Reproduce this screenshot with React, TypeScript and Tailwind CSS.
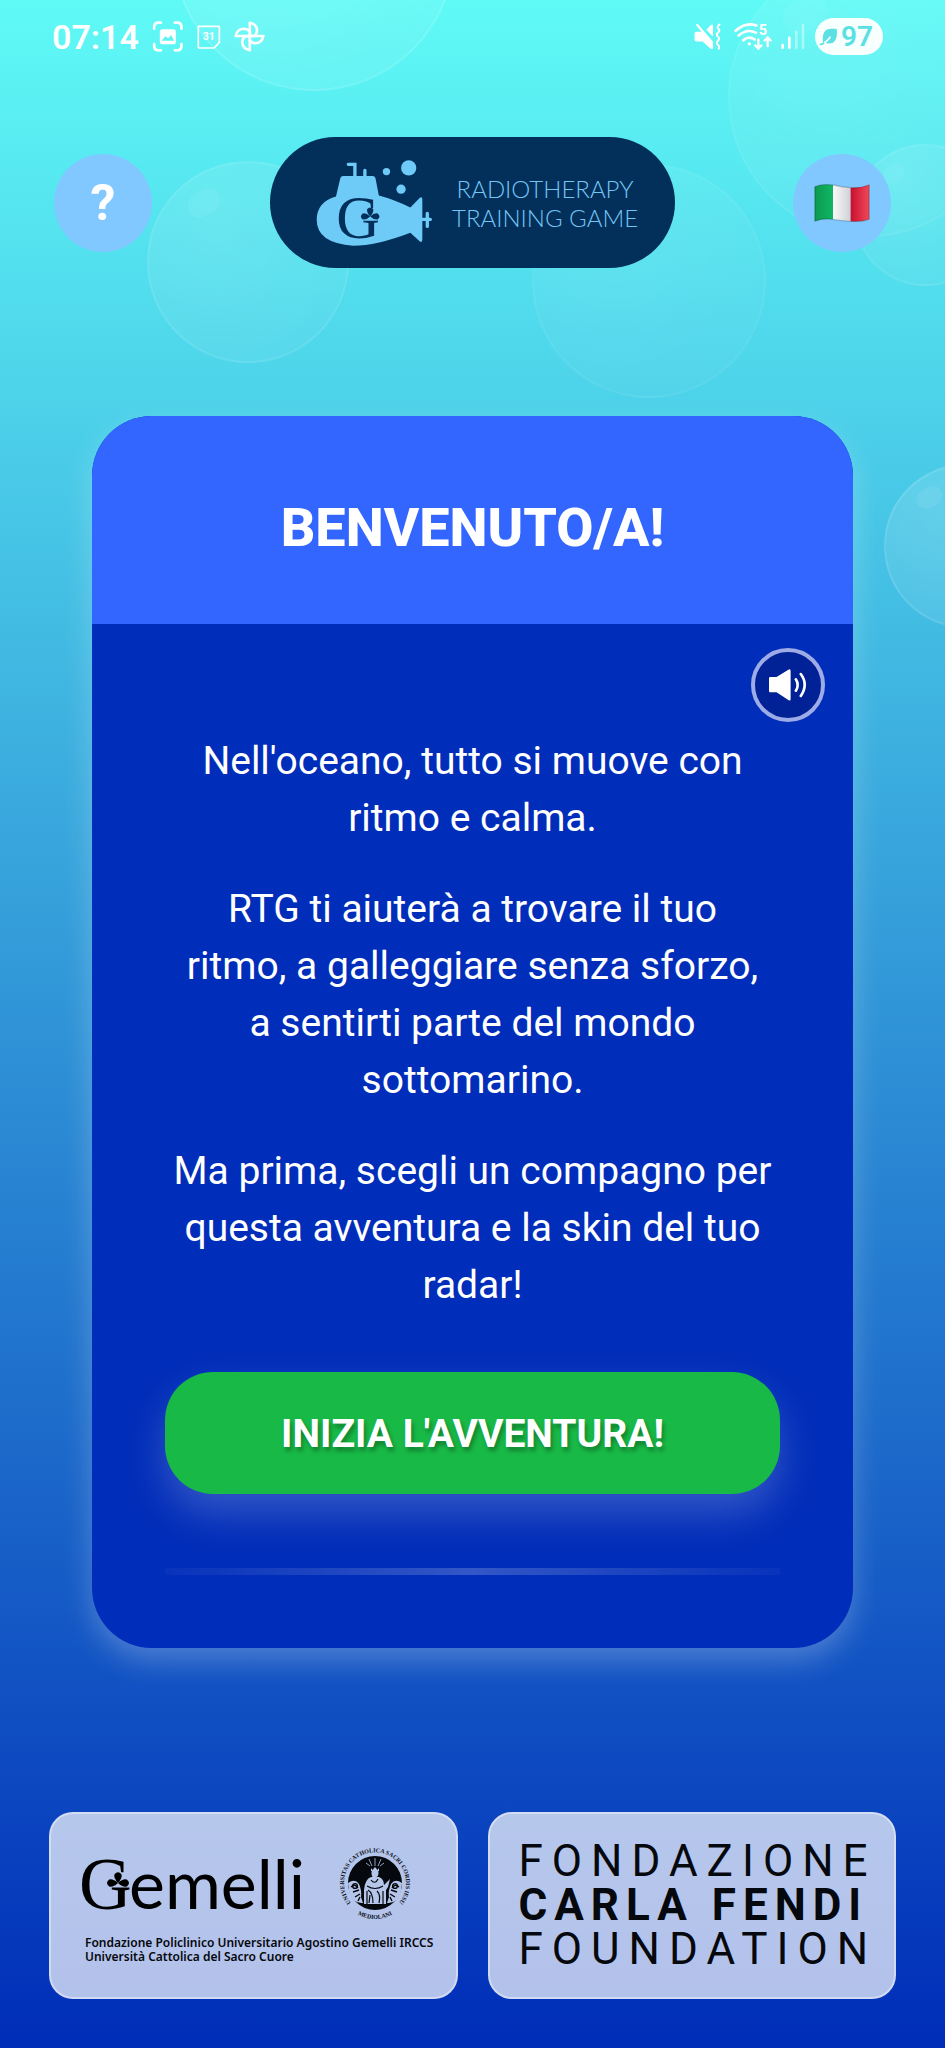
import clsx from "clsx";

type BubbleProps = {
  className: string;
};

// Decorative air bubble, placed freely on the sea background
function Bubble({ className }: BubbleProps) {
  return (
    <div
      className={clsx(
        "absolute rounded-full border-2 border-white/10 bg-radial-[at_35%_30%] from-white/15 via-white/10 to-white/5",
        className,
      )}
    >
      <div className="absolute top-[14%] left-[19%] h-[12%] w-[17%] -rotate-30 rounded-full bg-white/7" />
    </div>
  );
}

function StatusBar() {
  return (
    <div className="relative mt-[18px] flex h-[37px] items-center justify-between pr-[62px] pl-[52px] text-white">
      <div className="flex items-center gap-[13px]">
        <span className="text-[34px] leading-none font-semibold">07:14</span>
        <svg className="h-[31px] w-[32px]" viewBox="460 65 95 93" fill="none" aria-hidden>
          <path
            d="M466 88v-5q0-13 13-13h7M528 70h7q13 0 13 13v5M548 134v6q0 13-13 13h-7M486 153h-7q-13 0-13-13v-6"
            stroke="currentColor"
            strokeWidth="8"
            strokeLinecap="round"
          />
          <rect x="483" y="90" width="48" height="45" rx="8" fill="currentColor" />
          <path d="M488 124l12-13 8 6 9-10 9 17Z" fill="#5cf3f2" />
        </svg>
        <svg className="h-[24px] w-[24px]" viewBox="595 75 73 73" fill="none" aria-hidden>
          <path
            d="M601 79h60q2 0 2 2v47l-16 17h-46q-2 0-2-2V81q0-2 2-2Z"
            stroke="currentColor"
            strokeWidth="5"
          />
          <text x="631" y="121" textAnchor="middle" fontSize="32" fontWeight="700" fill="currentColor">
            31
          </text>
        </svg>
        <svg
          className="h-[31px] w-[31px]"
          viewBox="707 65 94 93"
          fill="none"
          stroke="currentColor"
          strokeWidth="8"
          strokeLinejoin="round"
          aria-hidden
        >
          <path d="M755 110V70q20 4 22 21 0 12-8 19Z" />
          <path d="M755 110h41q-4 20-22 22-13 0-19-8Z" />
          <path d="M755 110v43q-21-4-23-22 0-14 9-20Z" />
          <path d="M755 110h-43q4-20 23-22 13 0 20 9Z" />
        </svg>
      </div>
      <div className="flex items-center">
        <svg className="h-[27px] w-[28px]" viewBox="669 72 82 80" aria-hidden>
          <path
            d="M676 98H692L725 134V145Q724 152 716 147L694 127H676Q670 127 670 120V104Q670 98 676 98Z"
            fill="currentColor"
          />
          <path d="M705 92L718 79Q725 73 725 82V113Z" fill="currentColor" />
          <path d="M678 78L722 129" stroke="currentColor" strokeWidth="7" strokeLinecap="round" />
          <path
            d="M744 77q-9 6-3 12 6 6-2 12-6 6 1 12 6 6-1 12-6 6 1 12 5 5 2 11"
            fill="none"
            stroke="currentColor"
            strokeWidth="6"
            strokeLinecap="round"
          />
        </svg>
        <svg
          className="ml-[12px] h-[29px] w-[39px]"
          viewBox="789 72 117 86"
          fill="none"
          stroke="currentColor"
          strokeWidth="8"
          strokeLinecap="round"
          aria-hidden
        >
          <path d="M794 98q30-28 62-16M803 112q26-22 52-8M817 126q17-14 34-2" />
          <circle cx="835" cy="137" r="5" fill="currentColor" stroke="none" />
          <path d="M862 124v26M853 142l9 9 9-9M890 144v-26M881 127l9-9 9 9" strokeWidth="7" />
          <text x="863" y="110" fontSize="44" fontWeight="700" fill="currentColor" stroke="none">
            5
          </text>
        </svg>
        <svg
          className="ml-[7px] h-[27px] w-[26px]"
          viewBox="924 72 78 80"
          stroke="currentColor"
          strokeWidth="8"
          strokeLinecap="round"
          aria-hidden
        >
          <path d="M932 138v8M952 116v30" />
          <path d="M973 98v48M993 77v69" opacity="0.4" />
        </svg>
        <div className="ml-[9px] flex h-[37px] w-[68px] items-center rounded-full bg-white/95 pl-[4px] text-[#5be0e4]">
          <svg className="h-[18px] w-[19px]" viewBox="1040 84 58 54" aria-hidden>
            <path d="M1052 126q-4-40 26-40h16q3 22-4 34-10 18-38 6Z" fill="currentColor" />
            <path d="M1043 134q18-4 32-24" fill="none" stroke="#fff" strokeWidth="5" />
            <path d="M1042 134q8 0 14-6" fill="none" stroke="currentColor" strokeWidth="5" />
          </svg>
          <span className="ml-[3px] text-[28px] leading-none font-semibold">97</span>
        </div>
      </div>
    </div>
  );
}

type CloverProps = {
  x: number;
  y: number;
  r: number;
};

function Clover({ x, y, r }: CloverProps) {
  return (
    <g transform={`translate(${x} ${y}) scale(${r})`}>
      <path d="M0 0Q-.42-.45-.32-.8Q0-1.15.32-.8Q.42-.45 0 0Z" />
      <path d="M0 0Q.45-.42.8-.32Q1.2 0 .8.32Q.45.42 0 0Z" />
      <path d="M0 0Q-.45-.42-.8-.32Q-1.2 0-.8.32Q-.45.42 0 0Z" />
    </g>
  );
}

function GameLogo() {
  return (
    <div className="flex h-[131px] w-[405px] items-center rounded-full bg-[#03305b] pl-[45px]">
      <svg
        className="h-[88px] w-[118px] overflow-visible"
        viewBox="165 116 355 265"
        fill="#6ecbf7"
        aria-hidden
      >
        <path d="M228 229L241 174Q243 167 250 167H338Q345 167 347 174L357 226Q400 237 452 262L479 234Q488 227 488 238V358Q488 370 479 363L452 338Q350 377 280 377Q170 370 170 300Q170 245 228 229Z" />
        <path
          d="M265 132H285V170M315 150V170M503 280V319M486 298H512"
          fill="none"
          stroke="#6ecbf7"
          strokeWidth="10"
          strokeLinecap="round"
        />
        <circle cx="380" cy="154" r="11" />
        <circle cx="447" cy="143" r="23" />
        <circle cx="424" cy="207" r="14" />
        <g fill="#03305b">
          <text x="229" y="354" fontSize="182" className="font-['Liberation_Serif',serif]">
            G
          </text>
          <Clover x={331} y={289} r={28} />
        </g>
      </svg>
      <p className="ml-[19px] text-center font-['Lato',sans-serif] text-[24px] leading-[29px] font-light whitespace-nowrap text-[#74c5f3]">
        RADIOTHERAPY
        <br />
        TRAINING GAME
      </p>
    </div>
  );
}

function ItalianFlag() {
  return (
    <svg className="h-[38px] w-[56px]" viewBox="0 0 168 114" aria-hidden>
      <defs>
        <linearGradient id="flag-white" x1="0" x2="1">
          <stop offset="0" stopColor="#fafafa" />
          <stop offset="1" stopColor="#cfd0d6" />
        </linearGradient>
        <linearGradient id="flag-red" x1="0" x2="1">
          <stop offset="0" stopColor="#c8102e" />
          <stop offset="1" stopColor="#f0495a" />
        </linearGradient>
        <linearGradient id="flag-green" x1="0" x2="1">
          <stop offset="0" stopColor="#0b9a50" />
          <stop offset="1" stopColor="#10b765" />
        </linearGradient>
      </defs>
      <path d="M2 8Q28-2 57 3V106Q28 102 2 112Z" fill="url(#flag-green)" />
      <path d="M57 3Q84 9 110 11V112Q84 110 57 106Z" fill="url(#flag-white)" />
      <path d="M110 11Q140 13 166 2V106Q140 115 110 112Z" fill="url(#flag-red)" />
      <path
        d="M3 8Q28-2 57 3 84 9 110 11 140 13 165 3V106Q140 115 110 112 84 110 57 106 28 102 3 111Z"
        fill="none"
        stroke="#000"
        strokeOpacity="0.18"
        strokeWidth="4"
      />
    </svg>
  );
}

function GemelliLogo() {
  return (
    <div className="flex items-center justify-between pr-[14px]">
      <svg
        className="h-[60px] w-[226px] overflow-visible"
        viewBox="0 0 226 60"
        aria-label="Gemelli"
        role="img"
      >
        <text y="56" className="font-['Lato',sans-serif]">
          <tspan x="-2" fontSize="73" className="font-['Liberation_Serif',serif]">
            G
          </tspan>
          <tspan x="48" fontSize="68">
            emelli
          </tspan>
        </text>
        <Clover x={37} y={30} r={11} />
      </svg>
      <svg className="h-[74px] w-[74px] overflow-visible" viewBox="-37 -37 74 74" aria-hidden>
        <defs>
          <path id="seal-top" d="M-23 21A31 31 0 1 1 23 21" />
          <path id="seal-bottom" d="M-28 22A35 35 0 0 0 28 22" />
        </defs>
        <g fill="#0a0d14" fontSize="6" fontWeight="700" className="font-['Liberation_Serif',serif]">
          <text>
            <textPath href="#seal-top" startOffset="50%" textAnchor="middle">
              UNIVERSITAS CATHOLICA SACRI CORDIS IESU
            </textPath>
          </text>
          <text>
            <textPath href="#seal-bottom" startOffset="50%" textAnchor="middle">
              MEDIOLANI
            </textPath>
          </text>
        </g>
        <circle r="27" fill="#05080c" />
        {/* side angels */}
        <g fill="#b6c6ea">
          <path d="M-27 0Q-20-5-16 1Q-13 8-14 14L-12 20Q-23 21-26 8Z" />
          <path d="M27 0Q20-5 16 1Q13 8 14 14L12 20Q23 21 26 8Z" />
        </g>
        <g fill="none" stroke="#05080c" strokeWidth="1.4">
          <path d="M-24 4Q-20 0-17 5M-22 9l6-2M-20 14l5-3M-17 18l2-4M24 4Q20 0 17 5M22 9l-6-2M20 14l-5-3M17 18l-2-4" />
          <circle cx="-20" cy="3" r="2.4" />
          <circle cx="20" cy="3" r="2.4" />
        </g>
        {/* enthroned figure */}
        <g fill="#b6c6ea">
          <path d="M-3.5-10a3.5 4 0 1 1 7 0q0 4-3.5 4.5t-3.5-4.5ZM-4-15l1.5 2L0-16l2.500 3L4-15v3H-4Z" />
          <path d="M-4-6H4Q9-4 9 2L15-4 13 4 11 7V21H-11V7Q-10-4-4-6Z" />
        </g>
        <g stroke="#b6c6ea" strokeWidth="0.8">
          <path d="M0-17V-25M-3-17L-6-24M3-17L6-24M-5-17L-9-20M5-17L9-20" />
        </g>
        <g fill="none" stroke="#05080c" strokeWidth="1.2">
          <path d="M-8 3Q0 8 8 3M-7 7Q-2 10-2 20M2 8Q6 12 4 20M-4-3Q0 2 3-4M-8 8V21M8 8V21M-5 12L-6 20" />
        </g>
      </svg>
    </div>
  );
}

function WelcomeCard() {
  return (
    <main className="relative mx-[92px] mt-[148px] rounded-[60px] bg-[#002db9] text-white shadow-[0_12px_30px_rgba(255,255,255,0.25)]">
      <h1 className="flex h-[208px] items-center justify-center rounded-t-[60px] bg-[#3366ff] pt-4 text-[54px] leading-none font-extrabold">
        BENVENUTO/A!
      </h1>
      <div className="flex justify-end px-[28px] pt-[24px]">
        <button
          type="button"
          aria-label="Ascolta"
          className="flex size-[74px] items-center justify-center rounded-full border-4 border-[#9dabe6] bg-[#002296]"
        >
          <svg className="h-[32px] w-[38px]" viewBox="117 119 116 97" fill="none" aria-hidden>
            <path
              d="M117 147q0-4 4-4h19l36-22q7-4 7 4v85q0 8-7 3l-36-23h-19q-4 0-4-4Z"
              fill="currentColor"
            />
            <path
              d="M199 150q11 17 0 35M214 134q24 32 0 67"
              stroke="currentColor"
              strokeWidth="8"
              strokeLinecap="round"
            />
          </svg>
        </button>
      </div>
      <div className="flex flex-col px-[73px] pt-[11px] pb-[73px]">
        <div className="space-y-[34px] text-center text-[39px] leading-[57px]">
          <p>
            Nell'oceano, tutto si muove con
            <br />
            ritmo e calma.
          </p>
          <p>
            RTG ti aiuterà a trovare il tuo
            <br />
            ritmo, a galleggiare senza sforzo,
            <br />
            a sentirti parte del mondo
            <br />
            sottomarino.
          </p>
          <p>
            Ma prima, scegli un compagno per
            <br />
            questa avventura e la skin del tuo
            <br />
            radar!
          </p>
        </div>
        <button
          type="button"
          className="mt-[58px] h-[122px] rounded-[48px] bg-[#18b946] pt-[2px] text-[39px] font-bold shadow-[0_20px_40px_rgba(255,255,255,0.2)] text-shadow-[2px_4px_4px_rgba(0,0,0,0.3)]"
        >
          INIZIA L'AVVENTURA!
        </button>
        <div className="mt-[74px] h-[7px] bg-linear-to-r from-white/3 via-white/20 to-white/3" />
      </div>
    </main>
  );
}

export default function App() {
  return (
    <div className="relative flex min-h-screen flex-col overflow-hidden bg-linear-to-b/srgb from-[#5ffaf6] to-[#002db8] font-['Roboto',sans-serif]">
      <Bubble className="-top-[191px] left-[173px] size-[282px]" />
      <Bubble className="top-[161px] left-[147px] size-[202px] opacity-80" />
      <Bubble className="top-[164px] left-[532px] size-[234px] opacity-50" />
      <Bubble className="-top-[43px] -right-[63px] size-[280px] opacity-60" />
      <Bubble className="top-[144px] -right-[51px] size-[142px] opacity-70" />
      <Bubble className="top-[464px] -right-[103px] size-[164px]" />

      <StatusBar />

      <header className="relative mt-[82px] flex items-center justify-between px-[54px]">
        <button
          type="button"
          aria-label="Aiuto"
          className="size-[98px] rounded-full bg-[#80c8ff] text-[50px] leading-none font-bold text-white"
        >
          ?
        </button>
        <GameLogo />
        <button
          type="button"
          aria-label="Italiano"
          className="flex size-[98px] items-center justify-center rounded-full bg-[#80c8ff]"
        >
          <ItalianFlag />
        </button>
      </header>

      <WelcomeCard />

      <footer className="relative mx-[49px] mt-[164px] mb-[49px] grid grid-cols-2 gap-[30px] text-[#05080c]">
        <div className="h-[187px] rounded-3xl border-2 border-white/40 bg-white/70 pt-[32px] pr-[30px] pl-[30px]">
          <GemelliLogo />
          <p className="mt-[16px] pl-[4px] font-['Noto_Sans',sans-serif] text-[12px] leading-[14px] font-semibold whitespace-nowrap">
            Fondazione Policlinico Universitario Agostino Gemelli IRCCS
            <br />
            Università Cattolica del Sacro Cuore
          </p>
        </div>
        <div className="h-[187px] rounded-3xl border-2 border-white/40 bg-white/70 pt-[25px] pl-[29px] text-[44px] leading-[44px] whitespace-nowrap">
          <p className="tracking-[9px]">FONDAZIONE</p>
          <p className="font-bold tracking-[7px]">CARLA FENDI</p>
          <p className="tracking-[9px]">FOUNDATION</p>
        </div>
      </footer>
    </div>
  );
}
